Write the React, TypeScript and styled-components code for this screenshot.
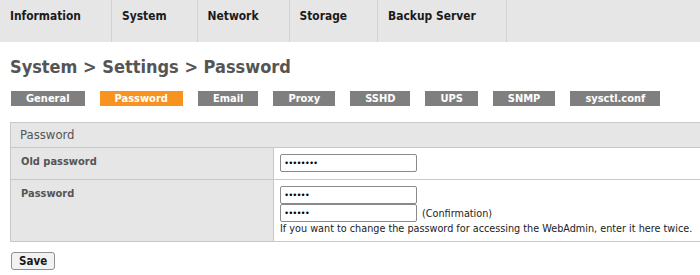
import styled, { createGlobalStyle } from "styled-components";

const NAV_ITEMS = ["Information", "System", "Network", "Storage", "Backup Server"];
const TABS = ["General", "Password", "Email", "Proxy", "SSHD", "UPS", "SNMP", "sysctl.conf"];

const GlobalStyle = createGlobalStyle`
	html, body {
		margin: 0;
		overflow: hidden;
		background: #fff;
	}
	body {
		font-family: "DejaVu Sans Condensed", "DejaVu Sans", sans-serif;
		font-stretch: condensed;
		color: #222;
	}
`;

export default function App() {
	return (
		<>
			<GlobalStyle />
			<TopNav>
				{NAV_ITEMS.map((item) => (
					<NavItem key={item}>{item}</NavItem>
				))}
			</TopNav>

			<Title>System &gt; Settings &gt; Password</Title>

			<Tabs>
				{TABS.map((tab) => (
					<Tab key={tab} $active={tab === "Password"}>
						{tab}
					</Tab>
				))}
			</Tabs>

			<Panel>
				<PanelHeader>Password</PanelHeader>
				<Row>
					<Label>Old password</Label>
					<Field>
						<Input type="password" defaultValue="********" />
					</Field>
				</Row>
				<Row>
					<Label>Password</Label>
					<Field>
						<Input type="password" defaultValue="******" />
						<InputLine>
							<Input type="password" defaultValue="******" />
							<Note>(Confirmation)</Note>
						</InputLine>
						<Help>
							If you want to change the password for accessing the WebAdmin, enter it
							here twice.
						</Help>
					</Field>
				</Row>
			</Panel>

			<SaveButton type="button">Save</SaveButton>
		</>
	);
}

const TopNav = styled.nav`
	display: flex;
	height: 42px;
	background: #e6e6e6;
`;

const NavItem = styled.div`
	padding: 9px 30px 0 10px;
	border-right: 1px solid #d2d2d2;
	font-size: 11.9px;
	font-weight: bold;
	color: #1a1a1a;
`;

const Title = styled.h1`
	margin: 13px 0 0 10px;
	font-size: 18px;
	line-height: 23px;
	font-weight: bold;
	color: #555;
`;

const Tabs = styled.div`
	display: flex;
	gap: 15px;
	margin: 13px 0 0 11px;
`;

const Tab = styled.div<{ $active?: boolean }>`
	height: 15px;
	padding: 0 15px;
	background: ${(p) => (p.$active ? "#f7931e" : "#7f7f7f")};
	color: #fff;
	font-size: 11px;
	font-weight: bold;
	line-height: 15px;
`;

const Panel = styled.div`
	width: 720px;
	margin: 16px 0 0 10px;
	border: 1px solid #c8c8c8;
	border-bottom: none;
`;

const PanelHeader = styled.div`
	height: 24px;
	padding-left: 9px;
	background: #e6e6e6;
	color: #555;
	font-size: 13px;
	line-height: 24px;
	border-bottom: 1px solid #c8c8c8;
`;

const Row = styled.div`
	display: grid;
	grid-template-columns: 263px 1fr;
	min-height: 31px;
	border-bottom: 1px solid #c8c8c8;
`;

const Label = styled.div`
	padding: 7px 10px;
	background: #e6e6e6;
	border-right: 1px solid #c8c8c8;
	color: #555;
	font-size: 11px;
	font-weight: bold;
`;

const Field = styled.div`
	display: flex;
	flex-direction: column;
	align-items: flex-start;
	padding: 6px 6px 5px;
	font-size: 10.75px;
`;

const InputLine = styled.div`
	display: flex;
	align-items: center;
	gap: 5px;
`;

const Input = styled.input`
	box-sizing: border-box;
	width: 137px;
	height: 18px;
	margin: 0;
	padding: 0 4px;
	border: 1px solid #8a8a8a;
	border-radius: 2px;
	font-size: 9px;
	letter-spacing: 1px;
	background: #fff;
`;

const Note = styled.span`
	color: #222;
`;

const Help = styled.div`
	color: #222;
	line-height: 14px;
	white-space: nowrap;
`;

const SaveButton = styled.button`
	display: block;
	margin: 10px 0 0 11px;
	height: 18px;
	padding: 0 7px;
	border: 1px solid #8f8f8f;
	border-radius: 3px;
	background: #f2f2f2;
	font-family: inherit;
	font-size: 11.5px;
	font-weight: bold;
	color: #1a1a1a;
`;
